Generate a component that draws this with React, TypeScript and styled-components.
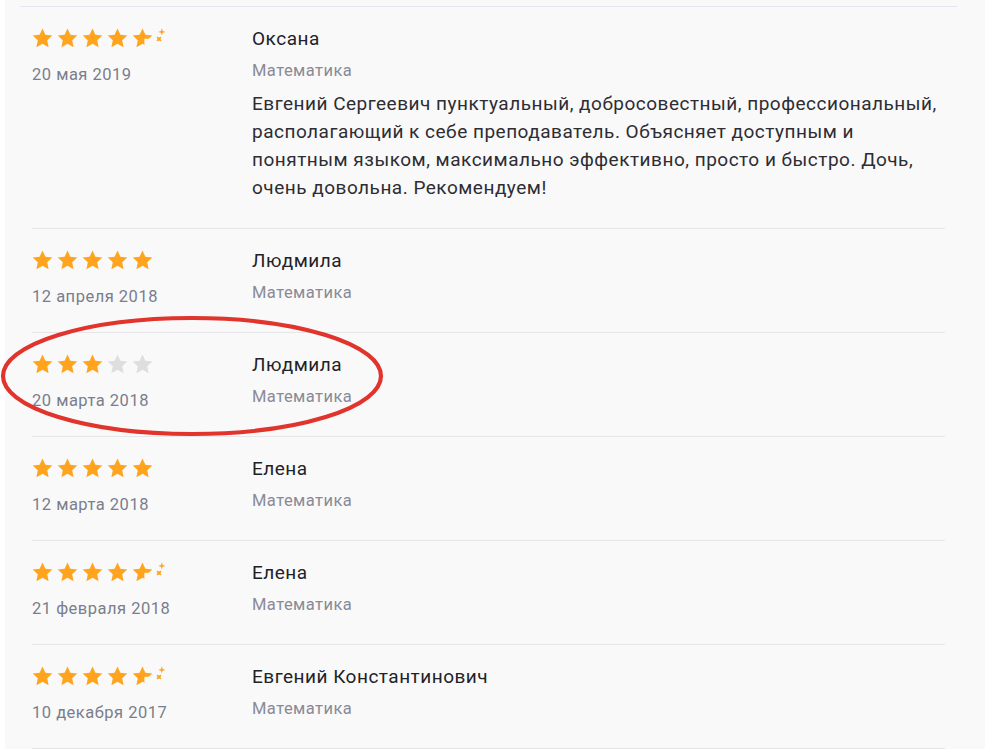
import React from "react";
import styled, { createGlobalStyle } from "styled-components";

const Global = createGlobalStyle`
  html, body { margin: 0; padding: 0; background: #ffffff; }
  body { font-family: Roboto, "Noto Sans", "Liberation Sans", sans-serif; }
  * { box-sizing: border-box; }
`;

const Page = styled.div`
  margin-left: 5px;
  min-height: 749px;
  background: #f9f9fa;
  padding: 6px 28px 0 15px;
  position: relative;
`;

const List = styled.div`
  border-top: 1px solid #e6e6f0;
  padding: 0 12px;
`;

const Row = styled.div`
  display: flex;
  padding: 21px 0 23px;
  border-bottom: 1px solid #e6e6ea;
`;

const Left = styled.div`
  width: 220px;
  flex-shrink: 0;
  display: flex;
  flex-direction: column;
`;

const Stars = styled.div`
  display: flex;
  gap: 4px;
  height: 21px;
  align-items: center;
`;

const DateText = styled.div`
  margin-top: 14px;
  font-size: 16.5px;
  letter-spacing: 0.5px;
  line-height: 24px;
  color: #7a7e8c;
`;

const Right = styled.div`
  flex: 1;
  display: flex;
  flex-direction: column;
`;

const Name = styled.div`
  font-size: 19px;
  letter-spacing: 0.5px;
  line-height: 24px;
  color: #222228;
  margin-top: -1px;
`;

const Subject = styled.div`
  margin-top: 8px;
  font-size: 16.5px;
  letter-spacing: 0.45px;
  line-height: 24px;
  color: #8a8a94;
`;

const Body = styled.div`
  margin-top: 7px;
  font-size: 19px;
  letter-spacing: 0.5px;
  line-height: 28px;
  color: #2d2d33;
  max-width: 700px;
  margin-bottom: 3px;
`;

const Ellipse = styled.svg`
  position: absolute;
  left: -5px;
  top: 313px;
  width: 390px;
  height: 126px;
  pointer-events: none;
`;

const STAR = "M10.5 0.6 L13.4 6.8 L20.3 7.6 L15.2 12.3 L16.6 19.2 L10.5 15.8 L4.4 19.2 L5.8 12.3 L0.7 7.6 L7.6 6.8 Z";

const Star: React.FC<{ kind: "full" | "empty" | "half"; id: string }> = ({ kind, id }) => {
  if (kind === "half") {
    return (
      <svg width="21" height="21" viewBox="0 0 21 21" style={{ overflow: "visible" }}>
        <defs>
          <clipPath id={id}>
            <path d="M0 0 H21 V10.8 H12.4 V21 H0 Z" />
          </clipPath>
        </defs>
        <path d={STAR} fill="#ffa41c" clipPath={`url(#${id})`} />
        <path d="M29.8 0.2 L30.7 3 L33.5 3.9 L30.7 4.8 L29.8 7.6 L28.9 4.8 L26.1 3.9 L28.9 3 Z" fill="#ffa41c" />
        <path d="M25.6 9.6 L28.4 12.4 M28.4 9.6 L25.6 12.4" stroke="#ffa41c" strokeWidth="1.8" strokeLinecap="round" />
      </svg>
    );
  }
  return (
    <svg width="21" height="21" viewBox="0 0 21 21">
      <path d={STAR} fill={kind === "full" ? "#ffa41c" : "#dedede"} />
    </svg>
  );
};

const Rating: React.FC<{ value: number; uid: string }> = ({ value, uid }) => {
  const items: ("full" | "empty" | "half")[] = [];
  for (let i = 1; i <= 5; i++) {
    if (value >= i) items.push("full");
    else if (value >= i - 0.5) items.push("half");
    else items.push("empty");
  }
  return (
    <Stars>
      {items.map((k, i) => (
        <Star key={i} kind={k} id={`clip-${uid}-${i}`} />
      ))}
    </Stars>
  );
};

type Review = { rating: number; date: string; name: string; subject: string; text?: string };

const reviews: Review[] = [
  {
    rating: 4.5,
    date: "20 мая 2019",
    name: "Оксана",
    subject: "Математика",
    text:
      "Евгений Сергеевич пунктуальный, добросовестный, профессиональный, располагающий к себе преподаватель. Объясняет доступным и понятным языком, максимально эффективно, просто и быстро. Дочь, очень довольна. Рекомендуем!",
  },
  { rating: 5, date: "12 апреля 2018", name: "Людмила", subject: "Математика" },
  { rating: 3, date: "20 марта 2018", name: "Людмила", subject: "Математика" },
  { rating: 5, date: "12 марта 2018", name: "Елена", subject: "Математика" },
  { rating: 4.5, date: "21 февраля 2018", name: "Елена", subject: "Математика" },
  { rating: 4.5, date: "10 декабря 2017", name: "Евгений Константинович", subject: "Математика" },
];

export default function App() {
  return (
    <>
      <Global />
      <Page>
        <List>
          {reviews.map((r, i) => (
            <Row key={i}>
              <Left>
                <Rating value={r.rating} uid={String(i)} />
                <DateText>{r.date}</DateText>
              </Left>
              <Right>
                <Name>{r.name}</Name>
                <Subject>{r.subject}</Subject>
                {r.text && <Body>{r.text}</Body>}
              </Right>
            </Row>
          ))}
        </List>
        <Ellipse viewBox="0 0 390 126">
          <ellipse cx="192" cy="63" rx="189" ry="58" fill="none" stroke="#e0342c" strokeWidth="4.2" />
        </Ellipse>
      </Page>
    </>
  );
}
